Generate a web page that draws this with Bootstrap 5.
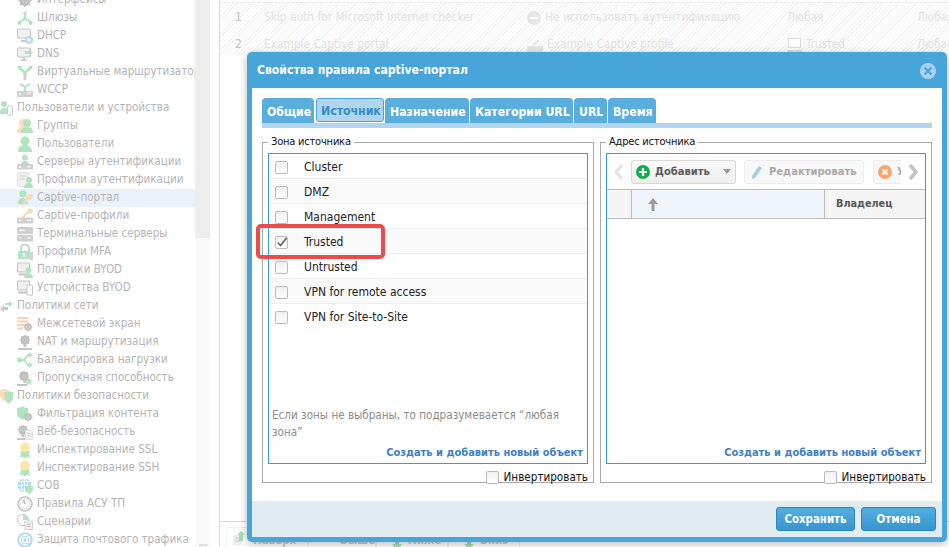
<!DOCTYPE html>
<html lang="ru">
<head>
<meta charset="utf-8">
<title>Свойства правила captive-портал</title>
<link href="https://cdn.jsdelivr.net/npm/bootstrap@5.3.0/dist/css/bootstrap.min.css" rel="stylesheet">
<style>
html,body{height:547px;overflow:hidden}
body{position:relative;width:949px;background:#fff;font:12px/1.2 "DejaVu Sans Condensed","DejaVu Sans",sans-serif;font-stretch:condensed;color:#111}
.ug-shell{height:547px}
.ug-side{width:195px;flex:none;overflow:hidden;color:#b5b5b5;font-size:11.55px}
.ug-tree{margin:-9px 0 0;padding:0;list-style:none}
.ug-tree li{height:18px;display:flex;align-items:center;white-space:nowrap;overflow:hidden;padding-left:17px;gap:4px}
.ug-tree li.ug-top{padding-left:0;gap:4px}
.ug-tree li.ug-on{background:#e9f2fa}
.ug-ico{width:16px;height:16px;flex:none;opacity:.85}
.ug-top .ug-ico{width:13px;margin-left:0}
.ug-track{width:15px;flex:none;background:linear-gradient(#eee 238px,#fafafa 238px);display:flex;justify-content:center;align-items:flex-end}
.ug-arrow{width:8px;height:2px;background:#ddd;margin-bottom:1px}
.ug-gap{width:9px;flex:none}
.ug-main{flex:1;border-left:1px solid #c5e2f1;min-width:0;display:flex;flex-direction:column}
.ug-thead{height:3px;display:flex;border-bottom:1px solid #eee;flex:none}
.ug-thead i{display:block;height:3px;border-right:1px solid #eee}
.ug-h1{width:34px}.ug-h2{width:262px}.ug-h3{width:261px}.ug-h4{width:130px}
.ug-rows{background:repeating-linear-gradient(135deg,#f3f3f3 0 1px,#fff 1px 3px);height:52px;padding-top:1px;color:#e2e2e2;flex:none;overflow:hidden}
.ug-row{height:27px;display:grid;grid-template-columns:44px 263px 260px 130px 1fr;align-items:center;font-size:11.8px}
.ug-row b{font-weight:400;color:#c4c4c4;padding-left:15px}
.ug-row span{display:flex;align-items:center;gap:4px;white-space:nowrap}
.ug-spacer{flex:1;border-bottom:1px solid #c5e2f1}
.ug-bar{height:25px;padding:5px 0 0 6px;display:flex;gap:0;color:#c8c8c8;flex:none;overflow:hidden}
.ug-barbtn{height:30px;border:1px solid #f2f2f2;border-radius:3px;display:flex;gap:6px;justify-content:flex-start;align-items:flex-end;padding:0 0 8px 15px;font-weight:700;font-size:11.5px}
.ug-barbtn svg{flex:none;margin-bottom:-2px}
.ug-barbtn.ug-b1{padding-left:6px}
.ug-b1 svg{margin-bottom:2px}
.ug-b1{width:82px}.ug-b2{width:68px}.ug-b3{width:72px}.ug-b4{width:72px}
.ug-dlg{position:absolute;left:247px;top:52px;width:700px;height:490px;background:#48a5d9;border-radius:5px;padding:0 5px 5px;box-shadow:0 2px 9px rgba(0,0,0,.28);display:flex;flex-direction:column;border:0}
.ug-dlg .modal-header{height:36px;padding:0 5px;border:0;border-radius:0;color:#fff;font-size:12.1px;font-weight:700;flex:none;display:flex;justify-content:space-between}
.ug-dlg .modal-body{flex:1;background:#fff;padding:10px;display:flex;flex-direction:column;min-height:0}
.ug-dlg .modal-footer{height:36px;flex:none;background:#e1ebf2;border:0;border-radius:0;padding:0 6px 0 0;gap:6px;justify-content:flex-end}
.ug-tabs{height:30px;border-bottom:5px solid #b0d5ec;gap:1px;flex-wrap:nowrap;flex:none}
.ug-tabs .nav-link{height:25px;margin:0;padding:3px 0 0 5px;display:flex;align-items:center;border-radius:4px 4px 0 0;background:#59aedd;color:#fff;font-weight:700;font-size:12.2px;border:0}
.ug-tabs .nav-link.active{background:#b0d5ec;color:#2f8fc9;border:1px solid #48a5d9;border-radius:3px;height:24px;margin-left:1px;padding-left:4px}
.ug-t1{width:52px}.ug-t2{width:68px}.ug-t3{width:84px}.ug-t4{width:103px}.ug-t5{width:33px;margin-right:2px}.ug-t6{width:48px}
.ug-cols{display:flex;gap:6px;margin-top:6px;flex:1;min-height:0}
.ug-field{flex:1;min-width:0;border:1px solid #aaa;padding:0 5px;margin:0;height:349px;display:flex;flex-direction:column}
.ug-field legend{float:none;width:auto;font-size:11px;letter-spacing:-.2px;line-height:16px;padding:0 3px;margin:0 0 3px 0;color:#111}
.ug-box{height:311px;border:1px solid #3a9ad4;display:flex;flex-direction:column;flex:none}
.ug-zones .list-group-item{height:25px;padding:2px 0 0 6px;display:flex;align-items:center;gap:16px;border:0;border-bottom:1px solid #eee;color:#222;background:#fff;border-radius:0;font-size:12px}
.ug-zones .list-group-item:nth-child(even){background:#fafafa}
.ug-chk.form-check-input{width:13px;height:13px;margin:0;flex:none;border:1px solid #bbb;border-radius:2px;background:linear-gradient(#f0f0f0,#fff)}
.ug-chk.form-check-input:checked{background:url("data:image/svg+xml,%3Csvg xmlns='http://www.w3.org/2000/svg' viewBox='0 0 13 13'%3E%3Cpath d='M2 6.500 5.300 10 12.500 1' fill='none' stroke='%23666' stroke-width='2'/%3E%3C/svg%3E"),linear-gradient(#f0f0f0,#fff);border-color:#bbb}
.ug-hint{margin-top:auto;padding:0 3px;color:#8c8c8c;line-height:17px;font-size:11.6px}
.ug-link{font-weight:700;font-size:11px;color:#3f7fbf;text-align:right;padding:5px 4px 3px 0;text-decoration:none;display:block;line-height:14px}
.ug-inv{display:flex;justify-content:flex-end;align-items:center;gap:5px;margin-top:7px;font-size:11.6px;color:#111}
.ug-tool{height:36px;display:flex;align-items:center;gap:8px;border-bottom:1px solid #bbb;flex:none;padding-left:6px;overflow:hidden}
.ug-tool .btn{height:24px;padding:0;display:flex;align-items:center;gap:5px;font-size:11.1px;font-weight:700;border:1px solid #e4e4e4;border-radius:3px;background:#f5f5f5;color:#5a5a5a;flex:none}
.ug-tool .btn:disabled{opacity:1;color:#aaa;background:#f8f8f8;border-color:#eee}
.ug-tool .btn span{padding-top:2px}
.ug-add{width:105px;margin-left:-2px;padding-left:4px!important;background:linear-gradient(#fafafa,#eee)!important;border-color:#d8d8d8!important}
.ug-edit{width:120px;padding-left:5px!important}
.ug-del{width:28px;padding-left:4px!important;overflow:hidden;border-right:0!important;border-radius:3px 0 0 3px!important;margin-left:1px;justify-content:flex-start}
.ug-chev{flex:none;width:12px;height:20px}
.ug-thd{height:29px;display:flex;border-bottom:1px solid #bbb;flex:none;font-weight:700;font-size:10.8px;color:#555;background:#f5f5f5}
.ug-thd>div{display:flex;align-items:center;border-right:1px solid #bbb}
.ug-thd>div:last-child{border:0}
.ug-c1{width:25px}.ug-c2{width:193px;background:#eff5fa;padding-left:16px}.ug-c3{flex:1;padding-left:11px}
.ug-fill{flex:1}
.ug-foot{width:79px;height:24px;padding:1px 0 0;font-size:11.4px;font-weight:700;color:#fff;border:1px solid #2d86bd;border-radius:3px;background:linear-gradient(#53aee0,#3795cf)}
.ug-foot:hover{color:#fff}
.ug-w75{width:75px}
.ug-red{position:absolute;left:256px;top:224px;width:129px;height:35px;border:4px solid #ef4a4a;border-radius:5px;pointer-events:none}
.ug-x{width:16px;height:16px;margin:2px 1px 0 0}
</style>
</head>
<body>
<svg width="0" height="0" style="position:absolute">
<defs>
<symbol id="i-gear" viewBox="0 0 16 16"><circle cx="8" cy="8" r="4.500" fill="none" stroke="#b5b5b5" stroke-width="3"/><path d="M8 1v14M1 8h14M3 3l10 10M13 3 3 13" stroke="#b5b5b5" stroke-width="1.500"/></symbol>
<symbol id="i-gw" viewBox="0 0 16 16"><path d="M8 1 5.500 4H7v4l-5 3 1 1.500L8 10l5 2.500 1-1.500-5-3V4h1.500z" fill="#a5e0b5"/><circle cx="2.500" cy="13" r="2" fill="#a5e0b5"/><circle cx="13.500" cy="13" r="2" fill="#a5e0b5"/></symbol>
<symbol id="i-dhcp" viewBox="0 0 16 16"><rect x="0.500" y="1" width="13" height="9" rx="1" fill="#eee" stroke="#bbb"/><path d="M4 13h6" stroke="#bbb" stroke-width="2"/><circle cx="12" cy="12" r="4" fill="#a9d5f0"/><path d="M10 12h4M12 10v4" stroke="#fff"/></symbol>
<symbol id="i-dns" viewBox="0 0 16 16"><rect x="0.500" y="2" width="13" height="9" rx="1" fill="#eee" stroke="#bbb"/><path d="M4 14h6M7 11v3" stroke="#bbb" stroke-width="1.500"/><path d="M8 5h4V3l4 3.500L12 10V8H8z" fill="#a5e0b5"/></symbol>
<symbol id="i-vr" viewBox="0 0 16 16"><path d="M8 16V9" stroke="#c9c9c9" stroke-width="3"/><path d="M8 9 3 4M8 9l5-5" stroke="#a5e0b5" stroke-width="2.500" fill="none"/><path d="M0 2h5l-3 4zM16 2h-5l3 4z" fill="#a5e0b5"/></symbol>
<symbol id="i-wccp" viewBox="0 0 16 16"><rect y="9" width="16" height="6" rx="1" fill="#c9c9c9"/><circle cx="3" cy="12" r="1" fill="#fff"/><path d="M10 11h4" stroke="#fff"/><path d="M8 9V5M8 5 3 2M8 5l5-3" stroke="#a5e0b5" stroke-width="2" fill="none"/></symbol>
<symbol id="i-usrdev" viewBox="0 0 13 16"><circle cx="4" cy="4" r="3" fill="#a5e0b5"/><path d="M0 14c0-4 1-6 4-6s4 2 4 6z" fill="#a5e0b5"/><rect x="7.500" y="6" width="5" height="9" rx="1" fill="#fff" stroke="#c0c0c0"/></symbol>
<symbol id="i-grp" viewBox="0 0 16 16"><circle cx="6" cy="5" r="4" fill="#fbd6a8"/><path d="M0 15c0-4 2-6 6-6s6 2 6 6z" fill="#fbd6a8"/><circle cx="10" cy="5" r="4" fill="#a5e0b5"/><path d="M4 15c0-4 2-6 6-6s6 2 6 6z" fill="#a5e0b5"/></symbol>
<symbol id="i-usr" viewBox="0 0 16 16"><circle cx="8" cy="5" r="4.500" fill="#a5e0b5"/><path d="M1 16c0-5 3-7 7-7s7 2 7 7z" fill="#a5e0b5"/></symbol>
<symbol id="i-sa" viewBox="0 0 16 16"><circle cx="8" cy="3.500" r="3" fill="#a5e0b5"/><path d="M4 10c0-2 2-3 4-3s4 1 4 3z" fill="#a5e0b5"/><rect y="10" width="16" height="5.500" rx="1" fill="#c9c9c9"/><circle cx="3" cy="12.700" r="1" fill="#fff"/><path d="M10 12.700h4" stroke="#fff"/></symbol>
<symbol id="i-pa" viewBox="0 0 16 16"><rect x="0.500" y="0.500" width="11" height="14" rx="1" fill="#eee" stroke="#ddd"/><path d="M3 4h6M3 7h5" stroke="#ccc"/><circle cx="12" cy="8" r="3" fill="#a5e0b5"/><path d="M7 16c0-3 2-5 5-5s4 2 4 5z" fill="#a5e0b5"/></symbol>
<symbol id="i-cap" viewBox="0 0 16 16"><circle cx="6" cy="4" r="3.500" fill="#a5e0b5"/><path d="M1 14c0-4 2-6 5-6s5 2 5 6z" fill="#a5e0b5"/><circle cx="12.500" cy="7" r="3" fill="#fbd6a8"/><path d="M11 8 5 15" stroke="#fbd6a8" stroke-width="2"/></symbol>
<symbol id="i-cp" viewBox="0 0 16 16"><rect y="9.500" width="16" height="6" rx="1" fill="#c9c9c9"/><circle cx="3" cy="12.500" r="1" fill="#fff"/><path d="M10 12.500h4" stroke="#fff"/><circle cx="13" cy="3" r="2.700" fill="#fbd6a8"/><path d="M11 4 5 10" stroke="#fbd6a8" stroke-width="2"/></symbol>
<symbol id="i-term" viewBox="0 0 16 16"><rect y="1" width="16" height="7" rx="1" fill="#c9c9c9"/><rect y="9" width="16" height="6.500" rx="1" fill="#c9c9c9"/><path d="M2 4.500h6M2 12h2M10 12h4" stroke="#fff"/></symbol>
<symbol id="i-mfa" viewBox="0 0 16 16"><path d="M4 7V4.500a4 4 0 0 1 8 0V7" fill="none" stroke="#a5e0b5" stroke-width="2"/><rect x="1" y="7" width="12" height="8" rx="1" fill="#a5e0b5"/><rect x="6" y="9" width="2" height="4" fill="#fff"/><rect x="13" y="8" width="3" height="8" fill="#c9c9c9"/></symbol>
<symbol id="i-byod" viewBox="0 0 16 16"><rect x="0.500" y="1" width="12" height="9" fill="#eee" stroke="#bbb"/><path d="M2 12.500h9" stroke="#bbb" stroke-width="2"/><circle cx="11.500" cy="8" r="2.800" fill="#a5e0b5"/><path d="M7 16c0-3 2-5 4.500-5s4.500 2 4.500 5z" fill="#a5e0b5"/></symbol>
<symbol id="i-bd" viewBox="0 0 16 16"><rect x="0.500" y="1" width="12" height="9" fill="#eee" stroke="#bbb"/><path d="M1 12.500h9" stroke="#bbb" stroke-width="2"/><rect x="10" y="5" width="5.500" height="10" rx="1" fill="#fff" stroke="#bbb"/></symbol>
<symbol id="i-net" viewBox="0 0 13 16"><path d="M5 5h4V3l4 3-4 3V7H5z" fill="#a5e0b5"/><path d="M8 9H4V7L0 11l4 3v-2h4z" fill="#c0c0c0"/></symbol>
<symbol id="i-fw" viewBox="0 0 16 16"><path d="M0 1h11v2H0zM0 4.500h11v2H0zM0 8h8v2H0zM0 11.500h6v2H0z" fill="#fbc9a5"/><use href="#i-gear" x="6" y="6" width="10" height="10"/></symbol>
<symbol id="i-nat" viewBox="0 0 16 16"><use href="#i-gear" x="2" y="0" width="12" height="12"/><path d="M8 10v3" stroke="#bbb" stroke-width="3"/><path d="M1 15h14" stroke="#bbb" stroke-width="2"/></symbol>
<symbol id="i-bal" viewBox="0 0 16 16"><path d="M1 8h6l4-5h2M7 8l4 5h2" stroke="#a5e0b5" stroke-width="2" fill="none"/><circle cx="2.500" cy="8" r="2.500" fill="#a5e0b5"/><path d="M12 0l4 3-4 3zM12 10l4 3-4 3z" fill="#a5e0b5"/></symbol>
<symbol id="i-bw" viewBox="0 0 16 16"><use href="#i-gear" x="1" y="0" width="12" height="12"/><path d="M8 10v3" stroke="#bbb" stroke-width="3"/><path d="M0 15h10" stroke="#bbb" stroke-width="2"/><path d="m12 7 1.200 3h3l-2.500 2 1 3.500-2.700-2-2.700 2 1-3.500-2.500-2h3z" fill="#a5e0b5"/></symbol>
<symbol id="i-sec" viewBox="0 0 13 16"><path d="M0 2c2 0 3-1 4.500-1.500L8 2v5c0 3-2 5-4 6-2-1-4-3-4-6z" fill="#fbd6a8"/><path d="M4.500 4c2 0 3-.5 4-1.500 1 1 2.500 1.500 4.500 1.500v5c0 3-2 5.500-4.500 6.500C6 14.500 4.500 12 4.500 9z" fill="#a5e0b5"/></symbol>
<symbol id="i-flt" viewBox="0 0 16 16"><path d="M0 2c3 0 4-1 5.500-2C7 1 8 2 11 2v5c0 3-2 5-5.500 7C2 12 0 10 0 7z" fill="#a5e0b5"/><use href="#i-gear" x="6" y="6" width="10" height="10"/></symbol>
<symbol id="i-web" viewBox="0 0 16 16"><use href="#i-gear" x="0" y="0" width="12" height="12"/><path d="M6 10v3" stroke="#bbb" stroke-width="3"/><path d="M0 15h9" stroke="#bbb" stroke-width="2"/><rect x="8.500" y="6.500" width="7" height="9" fill="#eee" stroke="#ddd"/><path d="M10 9.500h4M10 12h4" stroke="#ccc"/></symbol>
<symbol id="i-ssl" viewBox="0 0 16 16"><path d="M4 9 3 16l2.500-1.500L7 16h2l1.500-1.500L13 16l-1-7z" fill="#a5e0b5"/><circle cx="8" cy="5.500" r="5" fill="#fde49a"/></symbol>
<symbol id="i-ips" viewBox="0 0 16 16"><circle cx="7.500" cy="7.500" r="7" fill="#a9d5f0"/><path d="M.5 7.500h14M7.500.5v14M2 3.500h11M2 11.500h11" stroke="#fff" stroke-width=".8"/><ellipse cx="7.500" cy="7.500" rx="3" ry="7" fill="none" stroke="#fff" stroke-width=".8"/><path d="M8 8c3 0 3.500-.5 4-1 .5.500 1.500 1 4 1v3c0 2-1.500 4-4 5-2.500-1-4-3-4-5z" fill="#a5e0b5"/></symbol>
<symbol id="i-ics" viewBox="0 0 16 16"><circle cx="8" cy="8" r="7" fill="#eee" stroke="#bbb" stroke-width="1.500"/><circle cx="8" cy="8" r="4.500" fill="#fff" stroke="#ddd"/><path d="M8 8 6.500 4" stroke="#aaa" stroke-width="1.500"/></symbol>
<symbol id="i-scn" viewBox="0 0 16 16"><circle cx="6" cy="6" r="5.500" fill="#fff" stroke="#bbb"/><path d="M6 .5A5.500 5.500 0 0 1 11.500 6H6z" fill="#a5e0b5"/><rect x="8" y="7" width="7.500" height="8.500" fill="#eee" stroke="#ccc"/><path d="M9.500 10h4.500M9.500 12.500h4.500" stroke="#bbb"/></symbol>
<symbol id="i-mail" viewBox="0 0 16 16"><circle cx="8" cy="8" r="7.800" fill="#a9d5f0"/><circle cx="8" cy="8" r="2.500" fill="none" stroke="#fff" stroke-width="1.300"/><path d="M10.500 5.500V9.500c0 1.500 2.500 1.500 2.500-1.500a5 5 0 1 0-2 4" fill="none" stroke="#fff" stroke-width="1.300"/></symbol>
</defs>
</svg>

<div class="d-flex ug-shell">
  <nav class="ug-side">
    <ul class="ug-tree">
      <li><svg class="ug-ico"><use href="#i-gear"/></svg>Интерфейсы</li>
      <li><svg class="ug-ico"><use href="#i-gw"/></svg>Шлюзы</li>
      <li><svg class="ug-ico"><use href="#i-dhcp"/></svg>DHCP</li>
      <li><svg class="ug-ico"><use href="#i-dns"/></svg>DNS</li>
      <li><svg class="ug-ico"><use href="#i-vr"/></svg>Виртуальные маршрутизаторы</li>
      <li><svg class="ug-ico"><use href="#i-wccp"/></svg>WCCP</li>
      <li class="ug-top"><svg class="ug-ico"><use href="#i-usrdev"/></svg>Пользователи и устройства</li>
      <li><svg class="ug-ico"><use href="#i-grp"/></svg>Группы</li>
      <li><svg class="ug-ico"><use href="#i-usr"/></svg>Пользователи</li>
      <li><svg class="ug-ico"><use href="#i-sa"/></svg>Серверы аутентификации</li>
      <li><svg class="ug-ico"><use href="#i-pa"/></svg>Профили аутентификации</li>
      <li class="ug-on"><svg class="ug-ico"><use href="#i-cap"/></svg>Captive-портал</li>
      <li><svg class="ug-ico"><use href="#i-cp"/></svg>Captive-профили</li>
      <li><svg class="ug-ico"><use href="#i-term"/></svg>Терминальные серверы</li>
      <li><svg class="ug-ico"><use href="#i-mfa"/></svg>Профили MFA</li>
      <li><svg class="ug-ico"><use href="#i-byod"/></svg>Политики BYOD</li>
      <li><svg class="ug-ico"><use href="#i-bd"/></svg>Устройства BYOD</li>
      <li class="ug-top"><svg class="ug-ico"><use href="#i-net"/></svg>Политики сети</li>
      <li><svg class="ug-ico"><use href="#i-fw"/></svg>Межсетевой экран</li>
      <li><svg class="ug-ico"><use href="#i-nat"/></svg>NAT и маршрутизация</li>
      <li><svg class="ug-ico"><use href="#i-bal"/></svg>Балансировка нагрузки</li>
      <li><svg class="ug-ico"><use href="#i-bw"/></svg>Пропускная способность</li>
      <li class="ug-top"><svg class="ug-ico"><use href="#i-sec"/></svg>Политики безопасности</li>
      <li><svg class="ug-ico"><use href="#i-flt"/></svg>Фильтрация контента</li>
      <li><svg class="ug-ico"><use href="#i-web"/></svg>Веб-безопасность</li>
      <li><svg class="ug-ico"><use href="#i-ssl"/></svg>Инспектирование SSL</li>
      <li><svg class="ug-ico"><use href="#i-ssl"/></svg>Инспектирование SSH</li>
      <li><svg class="ug-ico"><use href="#i-ips"/></svg>СОВ</li>
      <li><svg class="ug-ico"><use href="#i-ics"/></svg>Правила АСУ ТП</li>
      <li><svg class="ug-ico"><use href="#i-scn"/></svg>Сценарии</li>
      <li><svg class="ug-ico"><use href="#i-mail"/></svg>Защита почтового трафика</li>
    </ul>
  </nav>
  <div class="ug-track"><div class="ug-arrow"></div></div>
  <div class="ug-gap"></div>
  <main class="ug-main">
    <div class="ug-thead"><i class="ug-h1"></i><i class="ug-h2"></i><i class="ug-h3"></i><i class="ug-h4"></i></div>
    <div class="ug-rows">
      <div class="ug-row"><b>1</b><span>Skip auth for Microsoft Internet checker</span><span><svg width="14" height="14" viewBox="0 0 14 14"><circle cx="7" cy="7" r="7" fill="#e6e6e6"/><path d="M3 7h8" stroke="#fff" stroke-width="2"/></svg>Не использовать аутентификацию</span><span>Любая</span><span>Любая</span></div>
      <div class="ug-row"><b>2</b><span>Example Captive portal</span><span><svg width="16" height="14" viewBox="0 0 16 14"><rect y="8" width="16" height="6" fill="#e6e6e6"/><path d="M5 8 12 2" stroke="#e6e6e6" stroke-width="2"/></svg>Example Captive profile</span><span><svg width="15" height="14" viewBox="0 0 15 14"><rect x="1.500" y=".5" width="12" height="9" fill="#fff" stroke="#ddd"/><path d="M0 13h15" stroke="#ddd" stroke-width="2"/></svg>Trusted</span><span>Любая</span></div>
    </div>
    <div class="ug-spacer"></div>
    <div class="ug-bar">
      <div class="ug-barbtn ug-b1"><svg width="14" height="16" viewBox="0 0 14 16"><rect y="5" width="9" height="10" rx="1" fill="#eee"/><path d="M2 8h5M2 11h5" stroke="#ccc"/><path d="M8 1 12 5h-2v6H6V5H4zM4 0h8" fill="#a5e0b5"/></svg>Наверх</div>
      <div class="ug-barbtn ug-b2"><svg width="10" height="12" viewBox="0 0 10 12"></svg>Выше</div>
      <div class="ug-barbtn ug-b3"><svg width="10" height="12" viewBox="0 0 10 12"><path d="M3 0h4v6h3l-5 6-5-6h3z" fill="#a5e0b5"/></svg>Ниже</div>
      <div class="ug-barbtn ug-b4"><svg width="10" height="12" viewBox="0 0 10 12"><path d="M3 0h4v6h3l-5 5-5-5h3zM0 11h10v1H0z" fill="#a5e0b5"/></svg>Вниз</div>
    </div>
  </main>
</div>

<section class="ug-dlg modal-content" role="dialog" aria-label="Свойства правила captive-портал">
  <header class="modal-header">
    <span>Свойства правила captive-портал</span>
    <svg class="ug-x" viewBox="0 0 16 16"><circle cx="8" cy="8" r="8" fill="#a9d3ec"/><path d="M4.500 4.500l7 7M11.500 4.500l-7 7" stroke="#48a5d9" stroke-width="2.200"/></svg>
  </header>
  <div class="modal-body">
    <ul class="nav ug-tabs">
      <li class="nav-item"><a class="nav-link ug-t1" href="#">Общие</a></li>
      <li class="nav-item"><a class="nav-link active ug-t2" href="#">Источник</a></li>
      <li class="nav-item"><a class="nav-link ug-t3" href="#">Назначение</a></li>
      <li class="nav-item"><a class="nav-link ug-t4" href="#">Категории URL</a></li>
      <li class="nav-item"><a class="nav-link ug-t5" href="#">URL</a></li>
      <li class="nav-item"><a class="nav-link ug-t6" href="#">Время</a></li>
    </ul>
    <div class="ug-cols">
      <fieldset class="ug-field">
        <legend>Зона источника</legend>
        <div class="ug-box">
          <ul class="list-group list-group-flush ug-zones">
            <li class="list-group-item"><input class="form-check-input ug-chk" type="checkbox" aria-label="Cluster">Cluster</li>
            <li class="list-group-item"><input class="form-check-input ug-chk" type="checkbox" aria-label="DMZ">DMZ</li>
            <li class="list-group-item"><input class="form-check-input ug-chk" type="checkbox" aria-label="Management">Management</li>
            <li class="list-group-item"><input class="form-check-input ug-chk" type="checkbox" checked aria-label="Trusted">Trusted</li>
            <li class="list-group-item"><input class="form-check-input ug-chk" type="checkbox" aria-label="Untrusted">Untrusted</li>
            <li class="list-group-item"><input class="form-check-input ug-chk" type="checkbox" aria-label="VPN for remote access">VPN for remote access</li>
            <li class="list-group-item"><input class="form-check-input ug-chk" type="checkbox" aria-label="VPN for Site-to-Site">VPN for Site-to-Site</li>
          </ul>
          <div class="ug-hint">Если зоны не выбраны, то подразумевается “любая зона”</div>
          <a class="ug-link" href="#">Создать и добавить новый объект</a>
        </div>
        <label class="ug-inv"><input class="form-check-input ug-chk" type="checkbox">Инвертировать</label>
      </fieldset>
      <fieldset class="ug-field">
        <legend>Адрес источника</legend>
        <div class="ug-box">
          <div class="ug-tool">
            <svg class="ug-chev" viewBox="0 0 12 20"><path d="M9 3 3 10l6 7" fill="none" stroke="#e6e6e6" stroke-width="3.500"/></svg>
            <button class="btn ug-add" type="button"><svg width="14" height="14" viewBox="0 0 14 14"><circle cx="7" cy="7" r="7" fill="#0bb24c"/><path d="M3 7h8M7 3v8" stroke="#fff" stroke-width="2.200"/></svg><span>Добавить</span><svg class="ms-2" width="8" height="5" viewBox="0 0 8 5"><path d="M0 0h8L4 5z" fill="#999"/></svg></button>
            <button class="btn ug-edit" type="button" disabled><svg width="14" height="16" viewBox="0 0 14 16"><path d="M9 2l3 2-7 10-3 1 .3-3.500z" fill="#a3cce8"/></svg><span>Редактировать</span></button>
            <button class="btn ug-del" type="button" disabled><svg width="14" height="14" viewBox="0 0 14 14" style="flex:none"><circle cx="7" cy="7" r="7" fill="#f9a66b"/><path d="M4.500 4.500l5 5M9.500 4.500l-5 5" stroke="#fff" stroke-width="2"/></svg><span>Удалить</span></button>
            <svg class="ug-chev" viewBox="0 0 12 20" style="margin-left:-2px"><path d="M3 3l6 7-6 7" fill="none" stroke="#c4c4c4" stroke-width="3.500"/></svg>
          </div>
          <div class="ug-thd">
            <div class="ug-c1"></div>
            <div class="ug-c2"><svg width="10" height="13" viewBox="0 0 10 13"><path d="M5 0 10 6H6.500v7h-3V6H0z" fill="#999"/></svg></div>
            <div class="ug-c3">Владелец</div>
          </div>
          <div class="ug-fill"></div>
          <a class="ug-link" href="#">Создать и добавить новый объект</a>
        </div>
        <label class="ug-inv"><input class="form-check-input ug-chk" type="checkbox">Инвертировать</label>
      </fieldset>
    </div>
  </div>
  <footer class="modal-footer">
    <button class="btn ug-foot" type="button">Сохранить</button>
    <button class="btn ug-foot ug-w75" type="button">Отмена</button>
  </footer>
</section>
<div class="ug-red"></div>
</body>
</html>
